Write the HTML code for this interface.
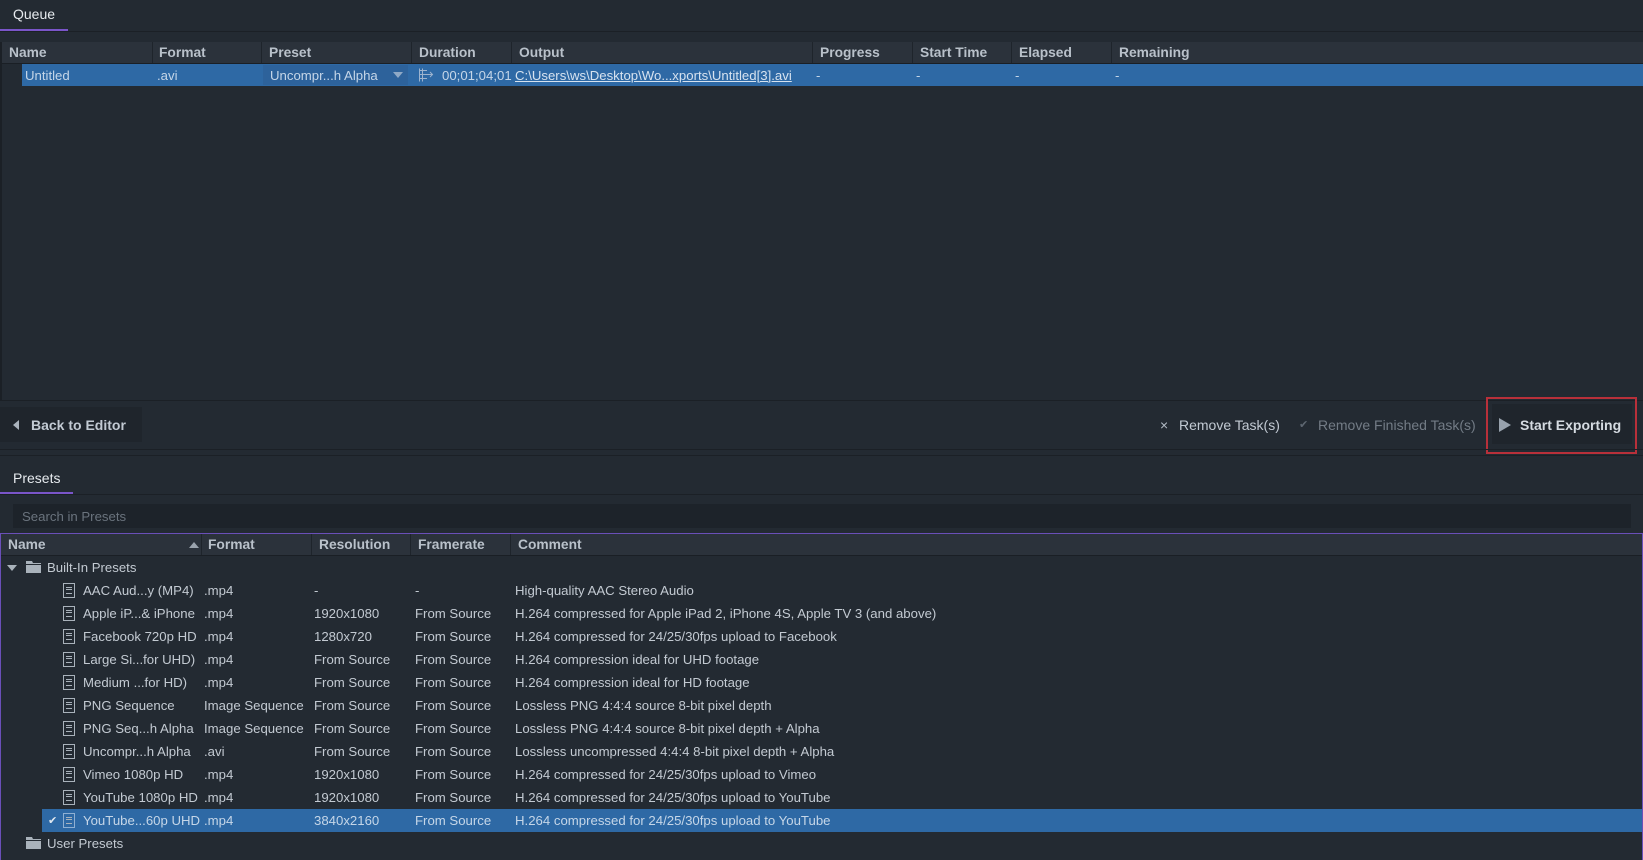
<!DOCTYPE html>
<html><head><meta charset="utf-8"><style>
*{margin:0;padding:0;box-sizing:border-box}
body{width:1643px;height:860px;background:#232a32;font-family:"Liberation Sans",sans-serif;color:#c3cad2;position:relative;overflow:hidden;font-size:13.2px}
.a{position:absolute;white-space:nowrap}
.hdr{position:absolute;left:2px;right:0;background:#2b323b;border-bottom:1px solid #1a1f25}
.hdr span{position:absolute;top:3px;font-weight:bold;color:#b9c1ca;font-size:13.8px}
.sep{position:absolute;top:0;bottom:0;width:1px;background:#1e242b}
.row{position:absolute;height:23px;left:0;right:0}
.row span{position:absolute;top:4px}
.doc{position:absolute;left:63px;top:4px;width:12px;height:15px;border:1px solid #a9b2bb}
.doc:before{content:"";position:absolute;left:2px;right:2px;top:3px;height:5px;border-top:1px solid #a9b2bb;border-bottom:1px solid #a9b2bb}
.doc:after{content:"";position:absolute;left:2px;right:2px;top:5px;border-top:1px solid #a9b2bb}
</style></head><body>
<div class="a" style="left:13px;top:6px;font-size:14px;color:#e6eaee">Queue</div>
<div class="a" style="left:0;top:29px;width:68px;height:2px;background:#7a55c9"></div>
<div class="a" style="left:0;top:31px;width:1643px;height:1px;background:#1b2026"></div>
<div class="a" style="left:0;top:42px;width:2px;height:358px;background:#1b2026"></div>
<div class="hdr" style="top:42px;height:22px">
<span style="left:7px">Name</span><span style="left:157px">Format</span><span style="left:267px">Preset</span><span style="left:417px">Duration</span><span style="left:517px">Output</span><span style="left:818px">Progress</span><span style="left:918px">Start Time</span><span style="left:1017px">Elapsed</span><span style="left:1117px">Remaining</span>
<div class="sep" style="left:150px"></div><div class="sep" style="left:259px"></div><div class="sep" style="left:409px"></div><div class="sep" style="left:509px"></div><div class="sep" style="left:810px"></div><div class="sep" style="left:910px"></div><div class="sep" style="left:1009px"></div><div class="sep" style="left:1109px"></div>
</div>
<div class="row" style="top:64px;left:22px;height:22px;background:#2e69a5;color:#c5d6e8">
<span style="left:3px;top:4px">Untitled</span><span style="left:135px">.avi</span>
<div style="position:absolute;left:241px;top:1px;width:145px;height:20px;background:#2d629b"></div>
<span style="left:248px">Uncompr...h Alpha</span>
<svg class="a" style="left:371px;top:8px" width="10" height="6"><path d="M0 0H10L5 6Z" fill="#8fa9c6"/></svg>
<svg class="a" style="left:396px;top:3px" width="16" height="16" fill="none" stroke="#9db4cf" stroke-width="1"><path d="M1.5 1.5V14.5M1.5 3.5H9M1.5 7.5H9M1.5 11.5H9M4.5 1.5V14.5M9 7.5H14M12 5L14.5 7.5 12 10"/></svg>
<span style="left:420px">00;01;04;01</span>
<span style="left:493px;text-decoration:underline;color:#d6e2ef">C:\Users\ws\Desktop\Wo...xports\Untitled[3].avi</span>
<span style="left:794px">-</span><span style="left:894px">-</span><span style="left:993px">-</span><span style="left:1093px">-</span>
</div>
<div class="a" style="left:0;top:400px;width:1643px;height:1px;background:#1b2026"></div>
<div class="a" style="left:0;top:407px;width:142px;height:35px;background:#1f252c"></div>
<svg class="a" style="left:13px;top:420px" width="6" height="10"><path d="M6 0V10L0 5Z" fill="#aab3bd"/></svg>
<div class="a" style="left:31px;top:417px;font-weight:bold;font-size:14px;color:#c2cad3">Back to Editor</div>
<div class="a" style="left:1160px;top:417px;font-size:14px;color:#b3bcc6">×</div>
<div class="a" style="left:1179px;top:417px;font-size:14px;color:#c2cad3">Remove Task(s)</div>
<div class="a" style="left:1299px;top:418px;font-size:11px;color:#5e6771">✔</div>
<div class="a" style="left:1318px;top:417px;font-size:14px;color:#737c86">Remove Finished Task(s)</div>
<div class="a" style="left:1486px;top:397px;width:151px;height:57px;border:2px solid #b8303a"></div>
<div class="a" style="left:1492px;top:404px;width:140px;height:40px;background:#1f252c"></div>
<svg class="a" style="left:1499px;top:418px" width="12" height="14"><path d="M0 0L12 7 0 14Z" fill="#98a2ad"/></svg>
<div class="a" style="left:1520px;top:417px;font-weight:bold;font-size:14px;color:#d5dbe1">Start Exporting</div>
<div class="a" style="left:0;top:449px;width:1643px;height:1px;background:#1b2026"></div>
<div class="a" style="left:0;top:455px;width:1643px;height:1px;background:#1b2026"></div>
<div class="a" style="left:13px;top:470px;font-size:14px;color:#e6eaee">Presets</div>
<div class="a" style="left:0;top:492px;width:73px;height:2px;background:#7a55c9"></div>
<div class="a" style="left:0;top:494px;width:1643px;height:1px;background:#1b2026"></div>
<div class="a" style="left:13px;top:504px;width:1618px;height:24px;background:#1d232a"></div>
<div class="a" style="left:22px;top:509px;color:#6a737d">Search in Presets</div>
<div class="a" style="left:0;top:533px;width:1643px;height:327px;border:1px solid #6a4fb8;border-bottom:none"></div>
<div class="hdr" style="top:534px;left:1px;right:1px;height:22px">
<span style="left:7px">Name</span><span style="left:207px">Format</span><span style="left:318px">Resolution</span><span style="left:417px">Framerate</span><span style="left:517px">Comment</span>
<svg class="a" style="left:188px;top:8px" width="10" height="6"><path d="M0 6H10L5 0Z" fill="#9aa3ad"/></svg>
<div class="sep" style="left:200px"></div><div class="sep" style="left:310px"></div><div class="sep" style="left:409px"></div><div class="sep" style="left:509px"></div>
</div>
<div class="row" style="top:556px">
<svg class="a" style="left:7px;top:9px" width="10" height="6"><path d="M0 0H10L5 6Z" fill="#a9b2bb"/></svg>
<svg class="a" style="left:26px;top:5px" width="15" height="12"><path d="M0 0H6L7 2H15V12H0Z" fill="#a9b2bb"/><path d="M0 3.5H15" stroke="#232a32"/></svg>
<span style="left:47px">Built-In Presets</span></div>
<div class="row" style="top:832px">
<svg class="a" style="left:26px;top:5px" width="15" height="12"><path d="M0 0H6L7 2H15V12H0Z" fill="#a9b2bb"/><path d="M0 3.5H15" stroke="#232a32"/></svg>
<span style="left:47px">User Presets</span></div>
<div class="row" style="top:579px"><div class="doc"></div><span style="left:83px">AAC Aud...y (MP4)</span><span style="left:204px">.mp4</span><span style="left:314px">-</span><span style="left:415px">-</span><span style="left:515px">High-quality AAC Stereo Audio</span></div>
<div class="row" style="top:602px"><div class="doc"></div><span style="left:83px">Apple iP...&amp; iPhone</span><span style="left:204px">.mp4</span><span style="left:314px">1920x1080</span><span style="left:415px">From Source</span><span style="left:515px">H.264 compressed for Apple iPad 2, iPhone 4S, Apple TV 3 (and above)</span></div>
<div class="row" style="top:625px"><div class="doc"></div><span style="left:83px">Facebook 720p HD</span><span style="left:204px">.mp4</span><span style="left:314px">1280x720</span><span style="left:415px">From Source</span><span style="left:515px">H.264 compressed for 24/25/30fps upload to Facebook</span></div>
<div class="row" style="top:648px"><div class="doc"></div><span style="left:83px">Large Si...for UHD)</span><span style="left:204px">.mp4</span><span style="left:314px">From Source</span><span style="left:415px">From Source</span><span style="left:515px">H.264 compression ideal for UHD footage</span></div>
<div class="row" style="top:671px"><div class="doc"></div><span style="left:83px">Medium ...for HD)</span><span style="left:204px">.mp4</span><span style="left:314px">From Source</span><span style="left:415px">From Source</span><span style="left:515px">H.264 compression ideal for HD footage</span></div>
<div class="row" style="top:694px"><div class="doc"></div><span style="left:83px">PNG Sequence</span><span style="left:204px">Image Sequence</span><span style="left:314px">From Source</span><span style="left:415px">From Source</span><span style="left:515px">Lossless PNG 4:4:4 source 8-bit pixel depth</span></div>
<div class="row" style="top:717px"><div class="doc"></div><span style="left:83px">PNG Seq...h Alpha</span><span style="left:204px">Image Sequence</span><span style="left:314px">From Source</span><span style="left:415px">From Source</span><span style="left:515px">Lossless PNG 4:4:4 source 8-bit pixel depth + Alpha</span></div>
<div class="row" style="top:740px"><div class="doc"></div><span style="left:83px">Uncompr...h Alpha</span><span style="left:204px">.avi</span><span style="left:314px">From Source</span><span style="left:415px">From Source</span><span style="left:515px">Lossless uncompressed 4:4:4 8-bit pixel depth + Alpha</span></div>
<div class="row" style="top:763px"><div class="doc"></div><span style="left:83px">Vimeo 1080p HD</span><span style="left:204px">.mp4</span><span style="left:314px">1920x1080</span><span style="left:415px">From Source</span><span style="left:515px">H.264 compressed for 24/25/30fps upload to Vimeo</span></div>
<div class="row" style="top:786px"><div class="doc"></div><span style="left:83px">YouTube 1080p HD</span><span style="left:204px">.mp4</span><span style="left:314px">1920x1080</span><span style="left:415px">From Source</span><span style="left:515px">H.264 compressed for 24/25/30fps upload to YouTube</span></div>
<div class="row" style="top:809px;left:42px;right:1px;background:#2e69a5;color:#c5d6e8"><span style="left:6px;font-size:11px;top:5px;color:#e0e8f0">✔</span><div class="doc" style="left:21px;border-color:#8fb0d3"></div><span style="left:41px">YouTube...60p UHD</span><span style="left:162px">.mp4</span><span style="left:272px">3840x2160</span><span style="left:373px">From Source</span><span style="left:473px">H.264 compressed for 24/25/30fps upload to YouTube</span></div>
</body></html>
